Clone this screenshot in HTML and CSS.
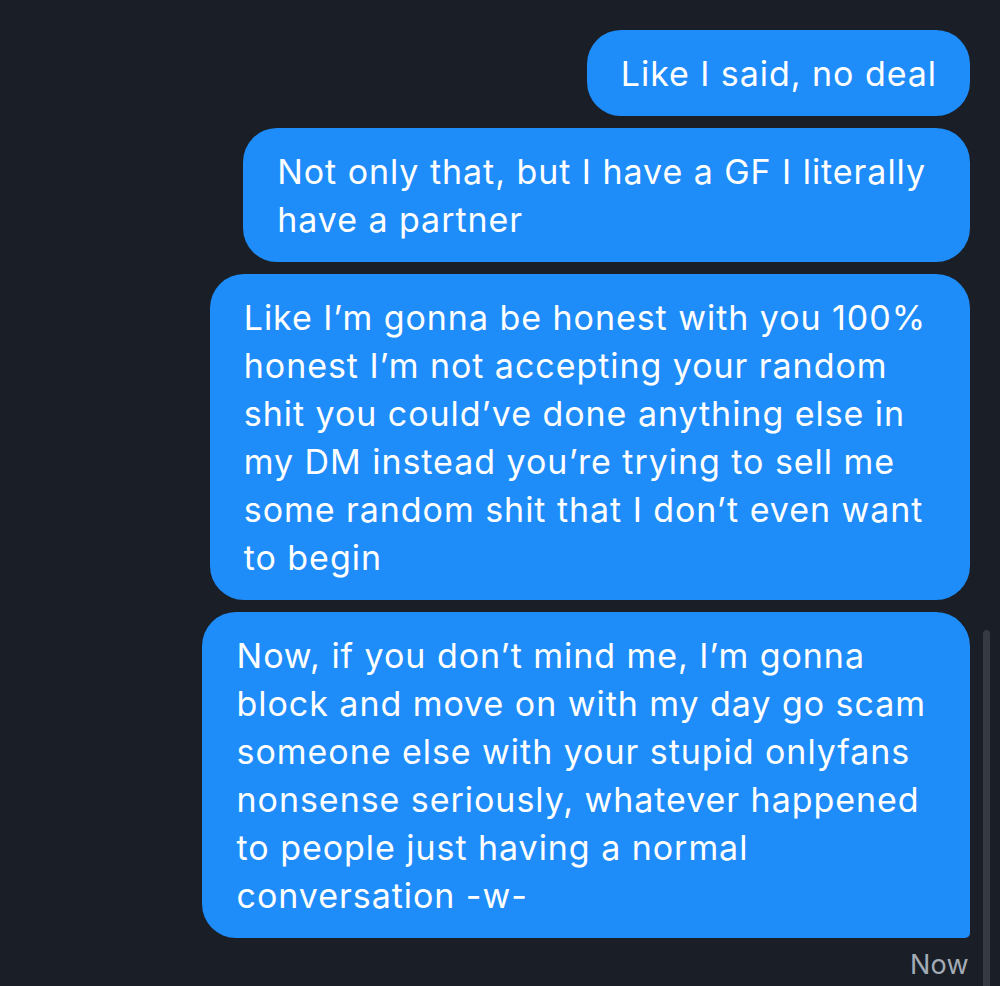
FILE: index.html
```html
<!DOCTYPE html>
<html>
<head>
<meta charset="utf-8">
<link rel="stylesheet" href="styles.css">
</head>
<body>
<div class="thread">
  <div class="bubble">Like I said, no deal</div>
  <div class="bubble multi">Not only that, but I have a GF I literally<br>have a partner</div>
  <div class="bubble multi">Like I’m gonna be honest with you 100%<br>honest I’m not accepting your random<br>shit you could’ve done anything else in<br>my DM instead you’re trying to sell me<br>some random shit that I don’t even want<br>to begin</div>
  <div class="bubble multi last">Now, if you don’t mind me, I’m gonna<br>block and move on with my day go scam<br>someone else with your stupid onlyfans<br>nonsense seriously, whatever happened<br>to people just having a normal<br>conversation -w-</div>
  <div class="time">Now</div>
</div>
<div class="scrollbar"></div>
</body>
</html>
```
FILE: styles.css
```css
html, body {
  margin: 0;
  padding: 0;
  background: #1a1f27;
  height: 100%;
  overflow: hidden;
}
body {
  font-family: Inter, "Noto Sans", sans-serif;
}
.thread {
  display: flex;
  flex-direction: column;
  align-items: flex-end;
  gap: 12px;
  padding: 30px 30px 0 0;
}
.bubble {
  background: #1e8cf9;
  color: #ffffff;
  font-size: 34px;
  line-height: 48px;
  padding: 20px 33px 18px 34px;
  border-radius: 34px;
  width: fit-content;
  letter-spacing: 0.95px;
}
.bubble.multi {
  padding-right: 44px;
}
.bubble.last {
  padding-left: 35px;
  border-bottom-right-radius: 5px;
}
.time {
  color: #a3abb5;
  font-size: 27px;
  line-height: 30px;
  letter-spacing: 0.3px;
  padding-right: 1px;
}
.scrollbar {
  position: absolute;
  left: 983px;
  top: 630px;
  width: 7px;
  height: 380px;
  border-radius: 4px;
  background: #363b43;
}
```
